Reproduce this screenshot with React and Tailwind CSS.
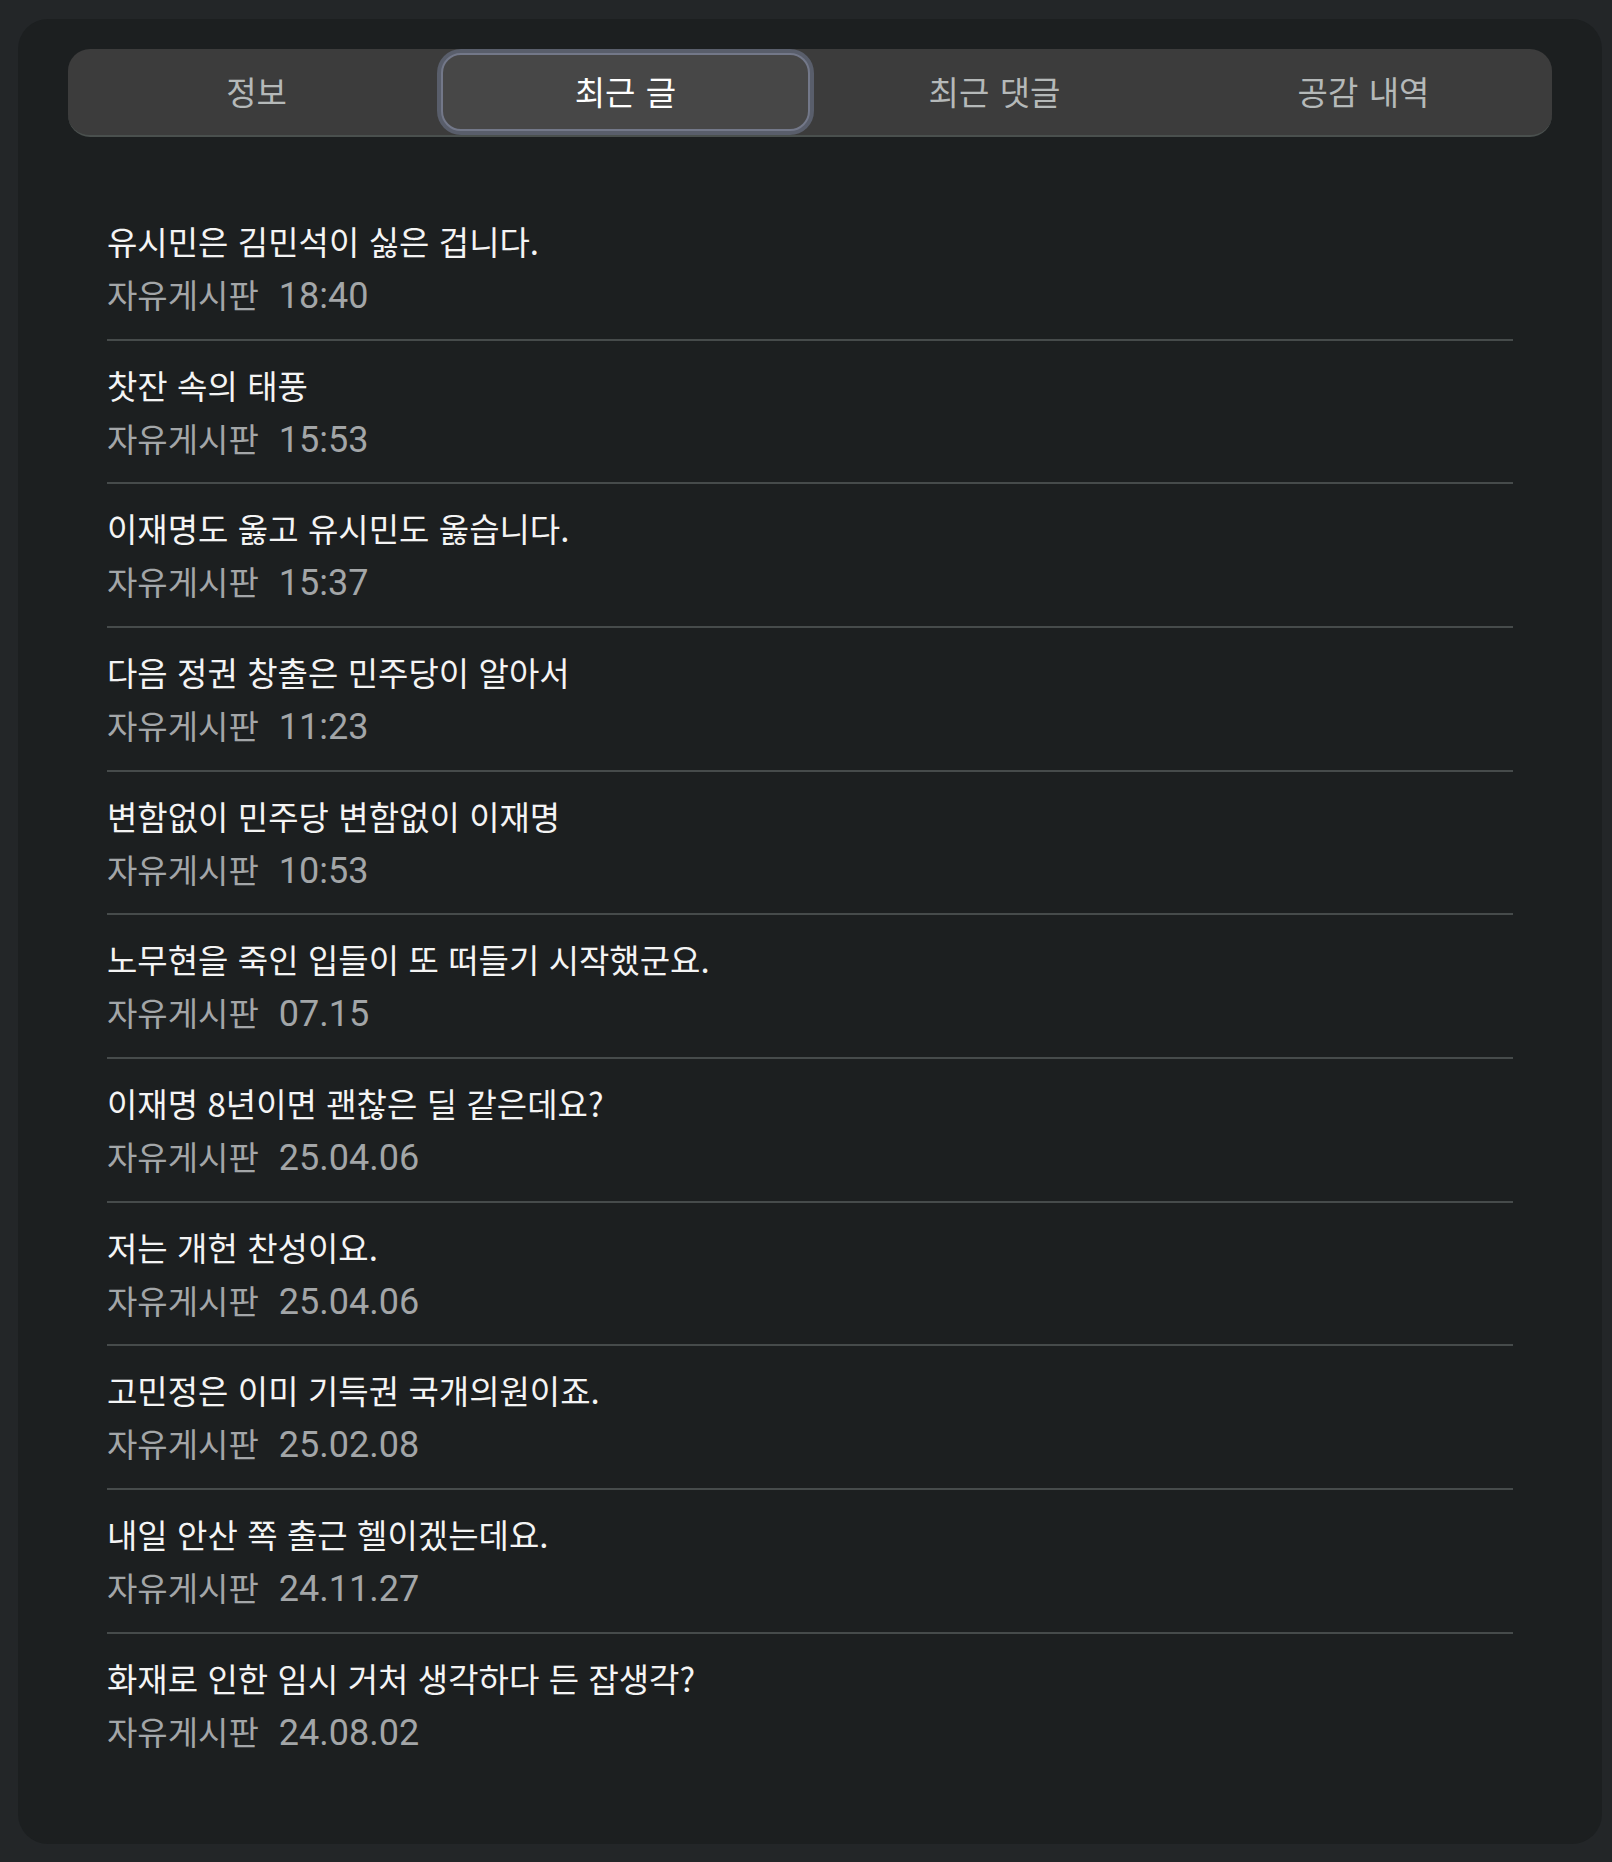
import React, { useState } from 'react';

const tabs = ['정보', '최근 글', '최근 댓글', '공감 내역'];

const posts = [
  { title: '유시민은 김민석이 싫은 겁니다.', board: '자유게시판', time: '18:40' },
  { title: '찻잔 속의 태풍', board: '자유게시판', time: '15:53' },
  { title: '이재명도 옳고 유시민도 옳습니다.', board: '자유게시판', time: '15:37' },
  { title: '다음 정권 창출은 민주당이 알아서', board: '자유게시판', time: '11:23' },
  { title: '변함없이 민주당 변함없이 이재명', board: '자유게시판', time: '10:53' },
  { title: '노무현을 죽인 입들이 또 떠들기 시작했군요.', board: '자유게시판', time: '07.15' },
  { title: '이재명 8년이면 괜찮은 딜 같은데요?', board: '자유게시판', time: '25.04.06' },
  { title: '저는 개헌 찬성이요.', board: '자유게시판', time: '25.04.06' },
  { title: '고민정은 이미 기득권 국개의원이죠.', board: '자유게시판', time: '25.02.08' },
  { title: '내일 안산 쪽 출근 헬이겠는데요.', board: '자유게시판', time: '24.11.27' },
  { title: '화재로 인한 임시 거처 생각하다 든 잡생각?', board: '자유게시판', time: '24.08.02' },
];

const App = () => {
  const [active, setActive] = useState(1);

  return (
    <div className="min-h-screen bg-[#232628] pl-[18px] pr-[10px] pt-[19px] pb-[16px] font-['Noto_Sans_CJK_KR',sans-serif]">
      <div className="bg-[#1c1f20] rounded-[30px] px-[50px] pt-[30px] pb-[69px]">
        {/* Tabs */}
        <div className="grid grid-cols-4 h-[88px] p-[4px] bg-[#3c3c3c] rounded-[22px] border-b-2 border-[#4a504e]">
          {tabs.map((tab, i) => (
            <button
              key={tab}
              onClick={() => setActive(i)}
              className={
                i === active
                  ? 'flex items-center justify-center rounded-[20px] bg-[#474747] border-2 border-[#737889] ring-4 ring-[#595e6b] text-white text-[33px] [word-spacing:3px]'
                  : 'flex items-center justify-center rounded-[20px] text-[#b5b9b9] text-[33px] [word-spacing:3px]'
              }
            >
              {tab}
            </button>
          ))}
        </div>

        {/* Post list */}
        <div className="mt-[60px] px-[39px]">
          {posts.map((post, i) => (
            <div
              key={i}
              className={
                i === posts.length - 1
                  ? 'pt-[23px] pb-[23px]'
                  : 'pt-[23px] pb-[23.67px] border-b-2 border-[#464b4b]'
              }
            >
              <div className="text-[33px] leading-[42px] text-[#f4f4f4] [word-spacing:2px] whitespace-nowrap">
                {post.title}
              </div>
              <div className="mt-[11px] flex items-baseline h-[42px] leading-[42px] text-[#a3a6a8]">
                <span className="text-[33px]">{post.board}</span>
                <span className="ml-[20px] text-[36px] font-['Roboto',sans-serif]">{post.time}</span>
              </div>
            </div>
          ))}
        </div>
      </div>
    </div>
  );
};

export default App;
